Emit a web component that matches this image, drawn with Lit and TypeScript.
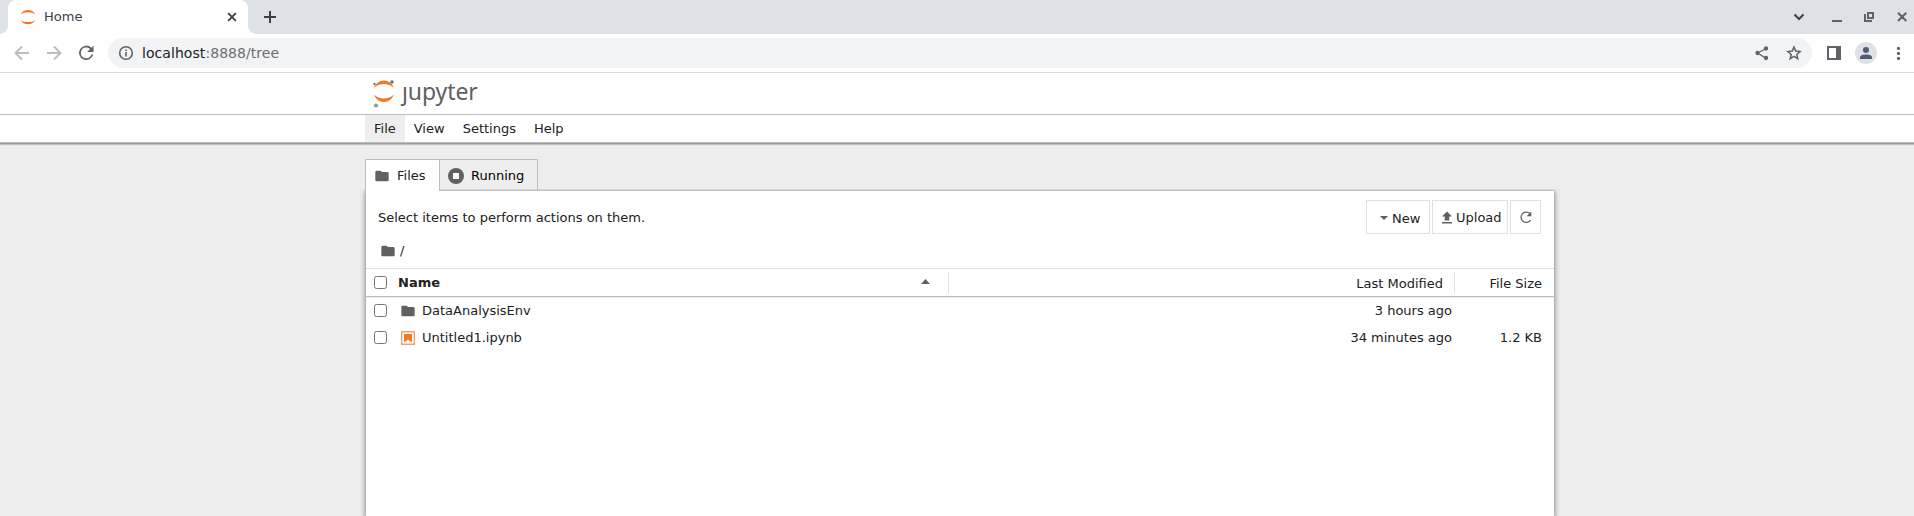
import { LitElement, html, css, svg } from "lit";
import { customElement } from "lit/decorators.js";

const folder = html`<svg class="folder" width="16" height="16" viewBox="0 0 24 24"><path fill="#616161" d="M10 4H4c-1.100 0-2 .9-2 2v12c0 1.100.9 2 2 2h16c1.100 0 2-.9 2-2V8c0-1.100-.9-2-2-2h-8z"/></svg>`;
const arcs = svg`<path d="M1 9.500Q4 2 11 2T21 9.500Q17 5.600 11 5.600T1 9.500Z"/>`;

interface Entry { name: string; kind: "folder" | "notebook"; modified: string; size: string; }
const entries: Entry[] = [
  { name: "DataAnalysisEnv", kind: "folder", modified: "3 hours ago", size: "" },
  { name: "Untitled1.ipynb", kind: "notebook", modified: "34 minutes ago", size: "1.2 KB" },
];

@customElement("browser-chrome")
class BrowserChrome extends LitElement {
  static styles = css`
    :host { display: block; font: 13px "DejaVu Sans", sans-serif; color: #3c4043; }
    svg { display: block; flex: none; }
    .strip { height: 34px; background: #dee1e6; display: flex; }
    .tab { box-sizing: border-box; width: 240px; height: 34px; margin-left: 8px; background: #fff; border-radius: 8px 8px 0 0; display: flex; align-items: center; padding: 0 10px 0 12px; position: relative; }
    .tab::before, .tab::after { content: ""; position: absolute; bottom: 0; width: 8px; height: 8px; }
    .tab::before { left: -8px; background: radial-gradient(circle at 0 0, #dee1e6 7.500px, #fff 8px); }
    .tab::after { right: -8px; background: radial-gradient(circle at 100% 0, #dee1e6 7.500px, #fff 8px); }
    .title { margin-left: 8px; flex: 1; line-height: 18px; }
    .plus { margin: 11px 0 0 16px; }
    .controls { margin-left: auto; display: flex; }
    .bar { box-sizing: border-box; height: 39px; background: #fff; border-bottom: 1px solid #dadce0; display: flex; align-items: center; }
    .nav { display: flex; width: 108px; }
    .nav svg:first-child { margin-left: 12px; }
    .nav svg + svg { margin-left: 12px; }
    .nav svg:last-child { margin-left: 11px; }
    .omni { box-sizing: border-box; width: 1704px; height: 30px; border-radius: 15px; background: #f1f3f4; display: flex; align-items: center; padding: 0 8px 0 9px; font-size: 14px; letter-spacing: 0.060px; color: #6b6f74; }
    .url { margin-left: 6px; flex: 1; }
    .host { color: #202124; }
    .star { margin-left: 12px; }
    .panel { margin-left: 12px; }
    .user { margin-left: 11px; }
    .dots { margin-left: 11px; }
  `;
  render() {
    return html`
      <div class="strip">
        <div class="tab">
          <svg width="16" height="16" viewBox="0 0 16 16" fill="#f37726"><path d="M1 5.300Q3 1 8 1t7 4.300Q12.500 3.300 8 3.300T1 5.300Z M1 11.200Q3 15.300 8 15.300t7-4.100Q12.500 13.100 8 13.100T1 11.200Z"/></svg>
          <span class="title">Home</span>
          <svg width="12" height="12" viewBox="0 0 12 12" stroke="#3c4043" stroke-width="1.900"><path d="M2.200 2.200l7.600 7.600M9.800 2.200l-7.600 7.600"/></svg>
        </div>
        <svg class="plus" width="12" height="12" viewBox="0 0 12 12" stroke="#3c4043" stroke-width="2"><path d="M0 6h12M6 0v12"/></svg>
        <div class="controls">
          <svg width="124" height="34" viewBox="1790 0 124 34" fill="none" stroke="#5f6368" stroke-width="2"><path stroke="#3c4043" d="M1794.500 14.500l4.500 4.500 4.500-4.500"/><path d="M1832 21h10M1868 13h5v5h-5zM1865 14v7h7M1898 12.700l8.300 8.300M1906.300 12.700l-8.300 8.300"/></svg>
        </div>
      </div>
      <div class="bar">
        <div class="nav">
          <svg width="20" height="20" viewBox="0 0 20 20" fill="none" stroke="#babcbe" stroke-width="1.900"><path d="M17 10H4.500M10 3.500L3.500 10l6.500 6.500"/></svg>
          <svg width="20" height="20" viewBox="0 0 20 20" fill="none" stroke="#babcbe" stroke-width="1.900"><path d="M3 10h12.500M10 3.500l6.500 6.500-6.500 6.500"/></svg>
          <svg width="22" height="20" viewBox="1 2 22 20" fill="#5f6368"><path d="M17.650 6.350A8 8 0 1 0 19.730 14h-2.080A6 6 0 1 1 12 6c1.660 0 3.140.69 4.220 1.780L13 11h7V4z" transform="translate(1.500 1) scale(.9)"/></svg>
        </div>
        <div class="omni">
          <svg width="19" height="20" viewBox="0 0 19 20" fill="none" stroke="#5f6368" stroke-width="1.600"><circle cx="9" cy="10" r="6.300"/><path d="M9 9v4.500M9 6.400v1.700"/></svg>
          <span class="url"><span class="host">localhost</span>:8888/tree</span>
          <svg width="20" height="20" viewBox="1752 43 20 20" fill="#5f6368" stroke="#5f6368" stroke-width="1.300"><path fill="none" d="M1765.500 49l-8 4 8 5"/><circle cx="1766" cy="48.500" r="1.500"/><circle cx="1757.500" cy="53" r="1.500"/><circle cx="1766" cy="58" r="1.500"/></svg>
          <svg class="star" width="20" height="20" viewBox="0 0 20 20" fill="none" stroke="#5f6368" stroke-width="1.500"><path d="M10 4l1.700 4.100 4.400.4-3.300 2.900 1 4.300-3.800-2.300-3.800 2.300 1-4.300-3.300-2.900 4.400-.4z"/></svg>
        </div>
        <svg class="panel" width="20" height="20" viewBox="0 0 20 20" fill="#5f6368"><path fill-rule="evenodd" d="M3 3h14v14H3zM5 5v10h7V5z"/></svg>
        <svg class="user" width="22" height="22" viewBox="0 0 22 22"><circle cx="11" cy="11" r="11" fill="#dee1e6"/><g fill="#515d72"><circle cx="11" cy="8" r="3"/><path d="M5 17v-1.500Q5 12.500 11 12.500t6 3V17z"/></g></svg>
        <svg class="dots" width="20" height="20" viewBox="0 0 20 20" fill="#5f6368"><circle cx="10.500" cy="5.400" r="1.600"/><circle cx="10.500" cy="10.400" r="1.600"/><circle cx="10.500" cy="15.400" r="1.600"/></svg>
      </div>`;
  }
}

@customElement("app-root")
class AppRoot extends LitElement {
  static styles = css`
    :host { display: flex; flex-direction: column; height: 516px; overflow: hidden; background: #eee; font: 13px/17px "DejaVu Sans", sans-serif; color: #212121; }
    svg { display: block; flex: none; }
    .head { box-sizing: border-box; height: 42px; background: #fff; border-bottom: 1px solid #bdbdbd; display: flex; padding: 5px 0 0 372px; }
    .word { font: 23px/28px "Noto Sans", sans-serif; letter-spacing: -0.100px; color: #616161; margin: -1px 0 0 6px; }
    .j { display: inline-block; clip-path: inset(10px -4px -4px -4px); }
    .menu { box-sizing: border-box; height: 28px; flex: none; background: #fff; border-bottom: 1px solid #bdbdbd; box-shadow: 0 1px 0 #9e9e9e, 0 2px 1px rgba(0,0,0,.2); padding-left: 365px; display: flex; }
    .item { padding: 5px 9px 0; }
    .on { background: #eee; }
    .work { width: 1190px; margin: 16px 0 0 365px; flex: 1; display: flex; flex-direction: column; }
    .tabs { display: flex; height: 32px; flex: none; position: relative; z-index: 1; }
    .tab { box-sizing: border-box; border: 1px solid #bdbdbd; border-bottom: 0; display: flex; align-items: center; color: #000; }
    .files { width: 75px; background: #fff; padding-left: 8px; gap: 7px; color: #212121; }
    .running { width: 99px; margin-left: -1px; padding-left: 8px; gap: 7px; }
    .card { margin: 0 1px; flex: 1; background: #fff; box-shadow: 0 1px 5px 1px rgba(0,0,0,.42); clip-path: inset(-2px -8px 0 -8px); }
    .tools { display: flex; padding: 9px 13px 0 12px; height: 51px; box-sizing: border-box; }
    .hint { flex: 1; padding-top: 9px; }
    .btn { box-sizing: border-box; height: 34px; border: 1px solid #e0e0e0; display: flex; align-items: center; margin-left: 2px; }
    .new { width: 64px; padding: 2px 0 0 13px; gap: 4px; }
    .up { width: 76px; padding-left: 6px; gap: 1px; }
    .re { width: 31px; padding-left: 7px; margin-left: 2px; }
    .crumb { display: flex; padding-left: 14px; height: 26px; gap: 4px; align-items: flex-start; }
    .crumb .folder { margin-top: 1px; }
    .thead { box-sizing: border-box; height: 29px; border-top: 1px solid #e0e0e0; border-bottom: 1px solid #bdbdbd; box-shadow: 0 1px 0 #eee; display: flex; padding-left: 8px; }
    .box { box-sizing: border-box; width: 13px; height: 13px; border: 1px solid #767676; border-radius: 2.500px; flex: none; background: #fff; }
    .thead .box { margin-top: 7px; }
    .name { font-weight: bold; margin: 5px 0 0 11px; flex: 1; }
    .sort { margin: 10px 18px 0 0; }
    .mod { box-sizing: border-box; width: 507px; height: 21px; border: solid #e0e0e0; border-width: 0 1px; margin-top: 3px; text-align: right; padding: 3px 11px 0 0; }
    .size { width: 99px; text-align: right; padding: 6px 12px 0 0; box-sizing: border-box; }
    .row { display: flex; height: 27px; align-items: center; padding-left: 8px; }
    .row .size { padding-top: 0; }
    .icon { margin: 0 6px 0 13px; }
    .label { flex: 1; }
    .time { padding-right: 3px; }
  `;
  render() {
    return html`
      <browser-chrome></browser-chrome>
      <div class="head">
        <svg width="24" height="30" viewBox="0 0 24 30"><g fill="#f37726"><g transform="translate(.900 .500)">${arcs}</g><g transform="translate(.900 26) scale(1 -1)">${arcs}</g></g><circle cx="2.500" cy="6" r="1.200" fill="#757575"/><circle cx="20" cy="4" r="1.800" fill="#757575"/><circle cx="4" cy="27.500" r="2.100" fill="#999"/></svg>
        <div class="word"><span class="j">j</span>upyter</div>
      </div>
      <div class="menu"><div class="item on">File</div><div class="item">View</div><div class="item">Settings</div><div class="item">Help</div></div>
      <div class="work">
        <div class="tabs">
          <div class="tab files">${folder}<span>Files</span></div>
          <div class="tab running"><svg width="16" height="16" viewBox="0 0 16 16"><circle cx="8" cy="8" r="8" fill="#616161"/><rect x="5" y="5" width="6" height="6" rx=".5" fill="#fff"/></svg><span>Running</span></div>
        </div>
        <div class="card">
          <div class="tools">
            <div class="hint">Select items to perform actions on them.</div>
            <div class="btn new"><svg width="8" height="5" viewBox="0 0 8 5"><path fill="#616161" d="M0 0h8L4 4z"/></svg><span>New</span></div>
            <div class="btn up"><svg width="16" height="16" viewBox="0 0 16 16" fill="#616161"><path d="M3 13h10v1.500H3zM5.700 11.500V7.500H3L8 2.500l5 5h-2.700v4z"/></svg><span>Upload</span></div>
            <div class="btn re"><svg width="16" height="16" viewBox="0 0 16 16" fill="none"><path stroke="#616161" stroke-width="1.300" d="M12.700 11A5.200 5.200 0 1 1 11.900 4.500"/><path fill="#616161" d="M13.300 2.500v4.700H8.600z"/></svg></div>
          </div>
          <div class="crumb">${folder}<span>/</span></div>
          <div class="thead">
            <div class="box"></div><div class="name">Name</div>
            <svg class="sort" width="9" height="5" viewBox="0 0 9 5"><path fill="#616161" d="M0 5h9L4.500 0z"/></svg>
            <div class="mod">Last Modified</div><div class="size">File Size</div>
          </div>
          <div class="rows">
            ${entries.map((e) => html`<div class="row"><div class="box"></div>
              <div class="icon">${e.kind === "folder" ? folder : html`<svg width="16" height="16" viewBox="0 0 16 16"><path fill="none" stroke="#f7a072" stroke-width="1.400" d="M1.700 1.700h12.600v12.600H1.700z"/><path fill="#f37726" d="M4 4h8v8.500L8 9.500l-4 3z"/></svg>`}</div>
              <div class="label">${e.name}</div><div class="time">${e.modified}</div><div class="size">${e.size}</div></div>`)}
          </div>
        </div>
      </div>`;
  }
}
